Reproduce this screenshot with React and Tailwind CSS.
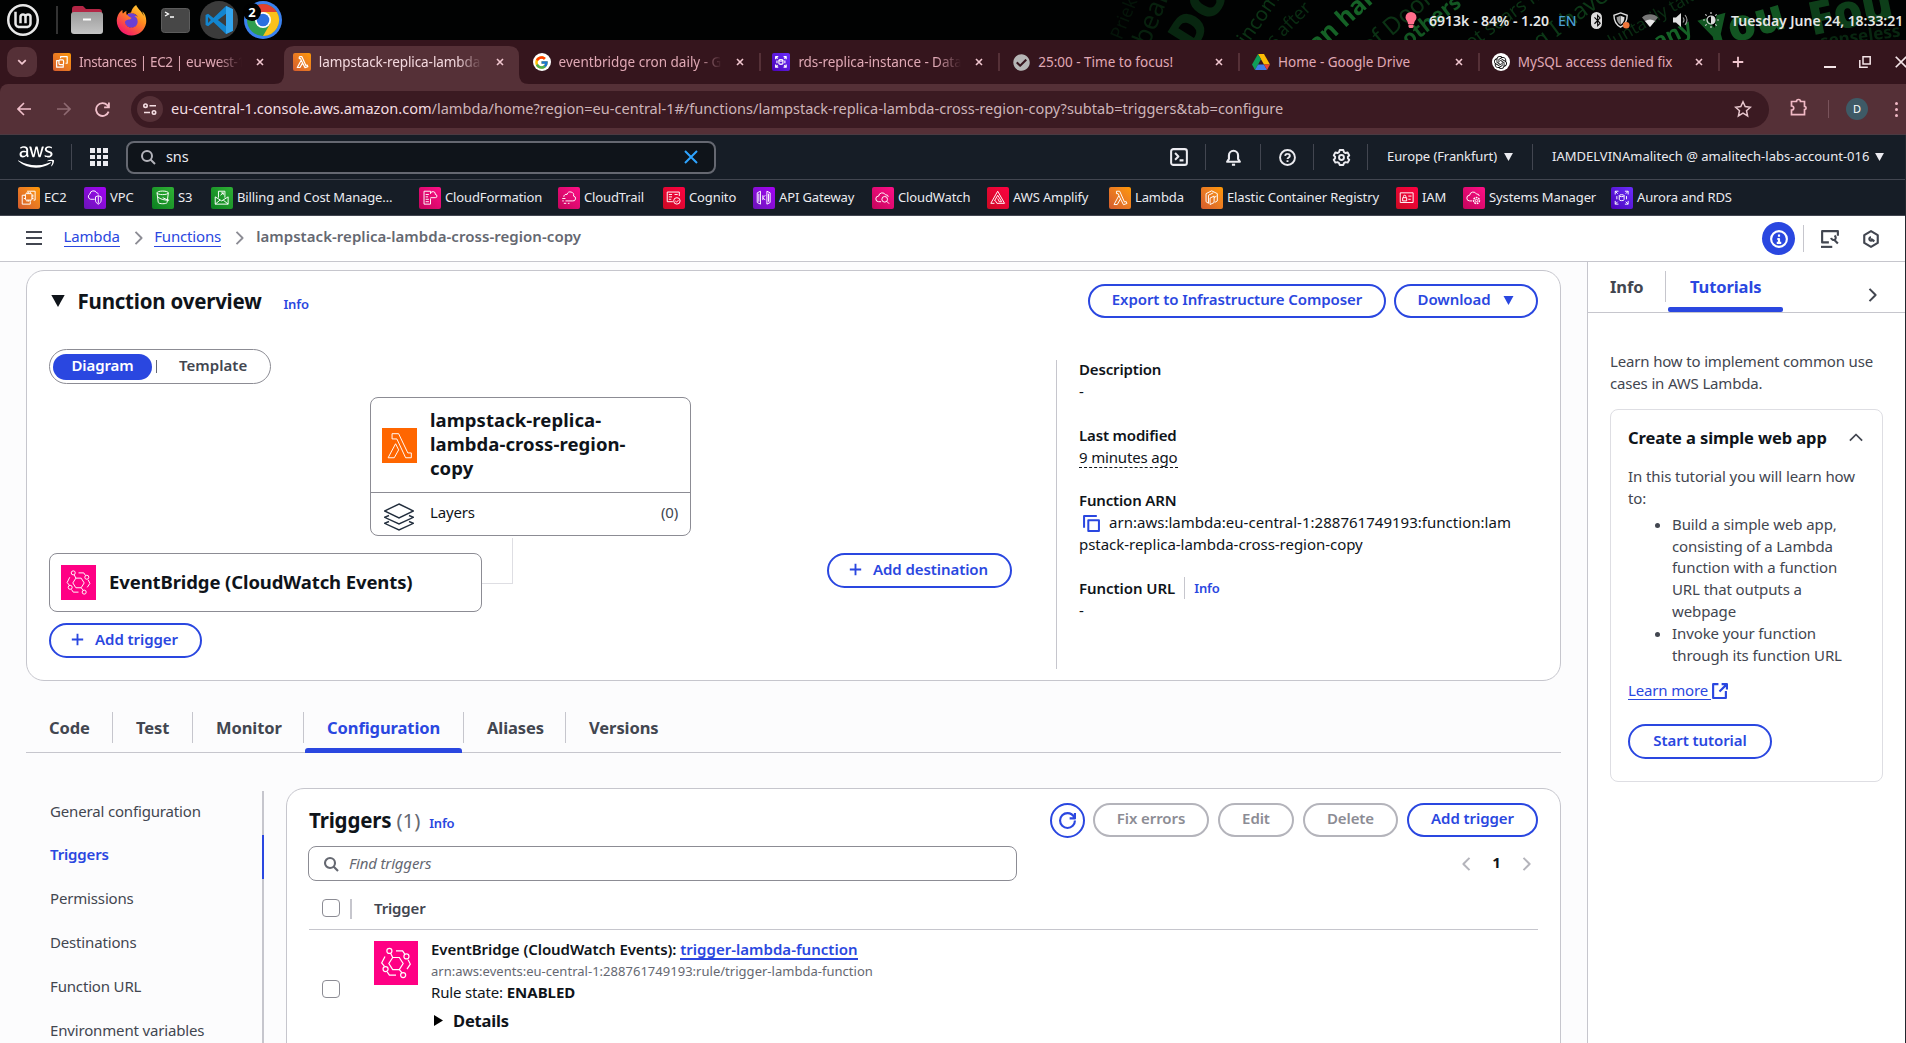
import React from 'react';
import { FcGoogle } from 'react-icons/fc';
import { FaAws, FaFirefoxBrowser, FaCheckCircle, FaBluetoothB } from 'react-icons/fa';
import { SiLinuxmint, SiOpenai } from 'react-icons/si';

/* ---------- generic glyphs (16px grid, 2px strokes) ---------- */
const paths = {
  search: <><circle cx="7" cy="7" r="5" /><path d="m15 15-4.5-4.5" /></>,
  close: <path d="m2 2 12 12M14 2 2 14" />,
  refresh: <path d="M15 8c0 3.87-3.13 7-7 7s-7-3.13-7-7 3.13-7 7-7c2.79 0 5.2 1.63 6.33 4M15 1v5h-5" />,
  plus: <path d="M8 1v14M1 8h14" />,
  right: <path d="m4 1 7 7-7 7" />,
  left: <path d="m12 1-7 7 7 7" />,
  up: <path d="m1 11 7-7 7 7" />,
  down: <path d="m2 5 6 6 6-6" />,
  copy: <><path d="M5 5h10v10H5z" /><path d="M13 1H1v11" /></>,
  external: <><path d="M14 8.5V15H2V2h5" /><path d="M10 2h5v5M15 2 8 9" /></>,
  menu: <path d="M0 2h16M0 8h16M0 14h16" />,
  info: <><circle cx="8" cy="8" r="7" /><path d="M8 11V8H6.5M8 4v2M6 11.4h4" /></>,
  help: <><circle cx="8" cy="8" r="7" /><path d="M5.8 6.5A2.1 2.1 0 0 1 8 4.6c1.3 0 2.2.8 2.2 1.9C10.200 8 8 8 8 9.500M8 10.700v1.500" /></>,
  shell: <><rect x="1" y="1" width="14" height="14" rx="2" /><path d="m4.500 4.500 3 3-3 3M8.500 11h3.500" /></>,
  bell: <><path d="M2 12h12l-1.700-2.700V6A4.300 4.300 0 0 0 3.700 6v3.300z" /><path d="M6.500 14.800h3" /></>,
  gear: <><circle cx="8" cy="8" r="2.300" /><path d="M6.300 1h3.400l.6 2 1.500.8 2-.5 1.500 2.800L14 7.300v1.500l1.300 1.300-1.500 2.700-2-.4-1.500.9-.6 1.800H6.300l-.6-1.800-1.500-.9-2 .4-1.500-2.700L2 8.800V7.300L.7 6l1.500-2.700 2 .5L5.700 3z" /></>,
  console: <><path d="M7 11H1V1h14v4" /><path d="M0 15h10" /><path d="m15 12-3.500-3.500M9 7a2.300 2.300 0 0 0 3.500 1.500A2.300 2.300 0 0 0 12 5" /></>,
  hexagon: <><path d="M8 1 14 4.500v7L8 15l-6-3.500v-7z" /><path d="M11 10 8 8M8 6.500a1.500 1.500 0 1 0 1.200 2.400" /></>,
};
const Glyph = ({ name, size = 16, w = 2, className = '' }) => (
  <svg viewBox="0 0 16 16" width={size} height={size} fill="none" stroke="currentColor" strokeWidth={w} strokeLinejoin="round" className={'block shrink-0 overflow-visible ' + className}>
    {paths[name]}
  </svg>
);
const Caret = ({ w = 10, h = 9, className = '' }) => (
  <svg viewBox="0 0 10 9" width={w} height={h} className={'block shrink-0 ' + className}><path d="M0 0h10L5 9z" fill="currentColor" /></svg>
);

/* ---------- service artwork (24px grid) ---------- */
const art = {
  ec2: <><rect x="8" y="7" width="8" height="8" rx="1" /><path d="M10 7V5M12 7V5M14 7V5M16 9h2M16 11h2M16 13h2M14 15v2M12 15v2M10 15v2M8 9H6M8 13H6" /><path d="M10 4h10v11h-2M7 9H4v11h10v-3" /></>,
  ec2Mark: <><rect x="7.500" y="9" width="7" height="7" rx="1.500" /><path d="M10 6.500V4h10v10h-2.500M7.500 10H4v10h10v-4" /></>,
  vpc: <><path d="M12 14H7a3.500 3.500 0 0 1-1-6.500A4.500 4.500 0 0 1 14.500 6c1 0 2 .8 2 2" /><path d="M16.500 9.500 20 11v4c0 2.500-1.500 4-3.500 5-2-1-3.500-2.500-3.500-5v-4zM16.500 10v9" /></>,
  s3: <><ellipse cx="12" cy="6" rx="7" ry="2.200" /><path d="M5 6l1.500 12c1 2 10 2 11 0L19 6M12 12l7 3.200M6 11c3 3 9 4.500 14 4" /></>,
  billing: <><path d="M8 12V4h8v8M4 11l8 5 8-5v9H4zM4 20l6-5M20 20l-6-5M10.500 9 14 6M11.500 6H14v2.500" /></>,
  cfn: <><path d="M5 4h8v3M5 4v16h8v-7M7 8h4M7 11h3M7 14h4M7 17h4" /><path d="M13 12h6a2 2 0 0 0 0-4 3 3 0 0 0-6-1" /></>,
  trail: <><path d="M8 16h9a3 3 0 0 0 1-6 4 4 0 0 0-8-2 3 3 0 0 0-4 3M4 16h2M4 13h4M6 19h3M11 19h2" /></>,
  cognito: <><path d="M19 10V5H4v12h7M6 8h4M6 11h4M6 14h3M13 8h4" /><circle cx="16" cy="16" r="4" /><path d="m14 16 1.500 1.500L18 15" /></>,
  api: <><path d="M8 4 4 6v12l4 2zM16 4l4 2v12l-4 2zM14 9l-3 3 3 3M11 9v6M6 7v10M18 7v10" /></>,
  watch: <><path d="M10 17H7a3.500 3.500 0 0 1 0-7 4.500 4.500 0 0 1 8.500-1.500A3 3 0 0 1 19 11" /><circle cx="14.500" cy="14" r="3.500" /><path d="m17 16.500 3 3" /></>,
  amplify: <><path d="M12 4 3.500 19H8M12 4l8.500 15H11l-2-3.500M12 9l-4 7M12 9l5 8h-3l-2-4" /></>,
  lambda: <path d="M8 4h4l6 13.500 2-.8 1 2.500-4.300 1.500L11 9.500M8 4v3h2l1 2.500L5 20.500h4l4-7" />,
  ecr: <><path d="M12 3.500 19 7v9l-3 1.800M12 3.500 5 7v10l3 2V9l6-3M10 20.500l5-2.500v-8l-5 2.500zM15 12l3-2" /></>,
  iam: <><path d="M4 6h16v12H4zM7 12h5v4H7zM8 12v-1.500a1.500 1.500 0 0 1 3 0V12M14 10h4M14 14h3" /></>,
  ssm: <><path d="M10 16H7a3.500 3.500 0 0 1 0-7 4.500 4.500 0 0 1 8.500-1.500A3 3 0 0 1 19 10" /><circle cx="15.500" cy="15.500" r="1.500" /><circle cx="15.500" cy="15.500" r="3.700" strokeDasharray="2.200 1" strokeWidth="1.800" /></>,
  rds: <><path d="M4 8V4h4M4 4l3 3M20 8V4h-4M20 4l-3 3M4 16v4h4M4 20l3-3M20 16v4h-4M20 20l-3-3" /><ellipse cx="12" cy="9.500" rx="3" ry="1.200" /><path d="M9 9.500v5c0 1.600 6 1.600 6 0v-5M6 10v4M18 10v4" /></>,
};
const tones = {
  orange: 'from-[#ff9900] to-[#d45b2c]',
  purple: 'from-[#a400f5] to-[#6b12b8]',
  green: 'from-[#2eb135] to-[#0a8020]',
  pink: 'from-[#ff0f87] to-[#c4055c]',
  red: 'from-[#ff0042] to-[#cc0a22]',
  indigo: 'from-[#6a2cff] to-[#4b00b8]',
};
const Service = ({ kind, tone, size = 'size-[22px]', w = 1.2 }) => (
  <span className={`grid shrink-0 place-items-center rounded-[2px] bg-gradient-to-bl ${tones[tone]} ${size}`}>
    <svg viewBox="0 0 24 24" className="size-[88%]" fill="none" stroke="#fff" strokeWidth={w} strokeLinejoin="round">{art[kind]}</svg>
  </span>
);
const EventBridgeArt = () => (
  <svg viewBox="0 0 40 40" className="size-full" fill="none" stroke="#fff" strokeWidth="1.100">
    <rect width="40" height="40" fill="#ff0084" stroke="none" />
    <path d="m17 15h6l3.500 5.500L23 26h-6l-3.500-5.500zM17 15l-2-4M23 26l2.500 3" />
    <circle cx="14" cy="9" r="2.300" /><circle cx="29.500" cy="14" r="2.300" /><circle cx="10.500" cy="25.500" r="2.300" /><circle cx="26.500" cy="31" r="2.300" />
    <path d="M20 9h6l2 3M31 17l2 4-3 4.500M10 14l-3 6 2.500 3M12 28l2 3h6" />
  </svg>
);
const LambdaArt = () => (
  <svg viewBox="0 0 40 40" className="size-full" fill="none" stroke="#fff" strokeWidth="1.100">
    <rect width="40" height="40" fill="#ff6600" stroke="none" />
    <path d="M11.500 6.500H19l10.500 22h4V34H27L17 12.500h-5.500zM15.500 18 7 34h7l5-9z" />
  </svg>
);

/* ---------- desktop bar ---------- */
const words = [
  ['left-[1043px] top-[9px] text-[18px] -rotate-[68deg] opacity-15', 'Priek'],
  ['left-[1070px] top-[4px] text-[26px] -rotate-[68deg] opacity-25', 'bear'],
  ['left-[1117px] -top-[10px] text-[46px] font-black -rotate-[58deg] opacity-30', 'DO'],
  ['left-[1178px] top-[8px] text-[20px] -rotate-[55deg] opacity-40', 'incom'],
  ['left-[1208px] top-[14px] text-[18px] -rotate-[45deg] opacity-35', 's after'],
  ['left-[1266px] top-[2px] text-[25px] font-bold -rotate-[42deg] opacity-80', 'an hard'],
  ['left-[1316px] top-[9px] text-[24px] -rotate-[40deg] opacity-40', 'of Door'],
  ['left-[1358px] top-[4px] text-[21px] font-bold -rotate-[38deg] opacity-70', 'others a'],
  ['left-[1420px] top-[11px] text-[19px] -rotate-[36deg] opacity-40', 'not sears m'],
  ['left-[1484px] top-[10px] text-[23px] -rotate-[36deg] opacity-45', 'ng I have'],
  ['left-[1566px] top-[12px] text-[17px] -rotate-[30deg] opacity-35', 'voluntarily take'],
  ['left-[1592px] top-[22px] text-[22px] font-bold -rotate-[26deg] opacity-80', 'any'],
  ['left-[1662px] top-[1px] text-[44px] font-black -rotate-[16deg] opacity-70', 'You'],
  ['left-[1770px] -top-[14px] text-[46px] font-black -rotate-[12deg] opacity-50', 'Fou'],
  ['left-[1780px] top-[27px] text-[17px] font-bold -rotate-[8deg] opacity-30', 'senseless'],
];
const DesktopBar = () => (
  <div className="relative flex h-10 shrink-0 items-center overflow-hidden bg-[#010202] tracking-normal text-[#e6e6e6]">
    <div className="pointer-events-none absolute inset-0 text-[#1a7a30]" aria-hidden="true">
      {words.map(([c, t]) => <span key={t} className={'absolute w-[160px] origin-center text-center leading-none whitespace-nowrap ' + c}>{t}</span>)}
    </div>
    <div className="relative flex items-center">
      <SiLinuxmint className="ml-[7px] size-8 text-[#e8e8e8]" />
      <span className="ml-[17px] h-7 w-[2px] bg-[#333]" />
      <svg className="ml-[13px] h-7 w-8" viewBox="0 0 32 28">
        <defs><linearGradient id="fold" x2="0" y2="1"><stop stopColor="#9b9b9b" /><stop offset="1" stopColor="#c4c4c4" /></linearGradient></defs>
        <path d="M1 3q0-3 3-3h8l3 3h13q3 0 3 3v6H1z" fill="#b32645" />
        <rect y="6" width="32" height="22" rx="3" fill="url(#fold)" /><path d="M12 13.500h8" stroke="#fff" strokeWidth="2" />
      </svg>
      <svg width="0" height="0" className="absolute"><defs><linearGradient id="fox" x1="1" y1="0" x2="0.3" y2="1"><stop stopColor="#ffe23a" /><stop offset=".45" stopColor="#ff8a1e" /><stop offset="1" stopColor="#f5156c" /></linearGradient></defs></svg>
      <span className="relative ml-[12px] grid size-8 place-items-center">
        <span className="absolute size-[15px] rounded-full bg-[#6b3fd4]" />
        <FaFirefoxBrowser className="relative size-[31px]" fill="url(#fox)" />
      </span>
      <svg className="ml-[14px] h-[25px] w-[29px]" viewBox="0 0 29 25">
        <rect x=".5" y=".5" width="28" height="24" rx="3" fill="#474747" stroke="#5c5c5c" /><path d="m4 4 3.500 2L4 8M9 9h4" fill="none" stroke="#fff" strokeWidth="1.300" />
      </svg>
      <span className="ml-[10px] grid size-[38px] place-items-center rounded-full bg-[#3b3b3b]">
        <svg viewBox="0 0 100 100" className="size-[28px]">
          <path d="M75 0 30 43 11 28 2 32v36l9 4 19-15 45 43 25-12V12zM75 28v44L46 50zM11 39l10 11-10 11z" fill="#1285cf" fillRule="evenodd" /><path d="M75 0v100l25-12V12z" fill="#33a5ee" />
        </svg>
      </span>
      <span className="relative ml-[6px] size-[38px]">
        <svg viewBox="0 0 38 38" className="size-[38px]">
          <circle cx="19" cy="19" r="19" fill="#3b82f0" /><circle cx="19" cy="19" r="16" fill="#2f9e4f" />
          <path d="M19 19 5.200 11A16 16 0 0 1 32.800 11z" fill="#e2402f" /><path d="M19 11h13.900A16 16 0 0 1 19 35l7-12z" fill="#fbc11b" />
          <circle cx="19" cy="19" r="8" fill="#fff" /><circle cx="19" cy="19" r="6.300" fill="#2b70e0" />
        </svg>
        <span className="absolute top-[2px] -left-px grid size-[18px] place-items-center rounded-full bg-black text-[13px] font-bold text-white">2</span>
      </span>
    </div>
    <div className="relative ml-auto flex items-center text-[14px] font-semibold whitespace-nowrap">
      <svg viewBox="0 0 12 16" className="mr-[9px] h-4 w-3"><path d="M6 0a5.500 5.500 0 0 1 5.500 5.500C11.500 8 9 9 9 12H3C3 9 .5 8 .5 5.500A5.500 5.500 0 0 1 6 0zM3.500 12.500h5V15l-1 1h-3l-1-1z" fill="#ff6f8b" /></svg>
      <span className="w-[131px] pl-[3px]">6913k - 84% - 1.20</span>
      <span className="w-[33px] pl-px font-medium text-[#4a9fd0]">EN</span>
      <span className="mr-[11px] ml-px grid h-[17px] w-[11px] place-items-center rounded-full bg-[#dcdcdc] text-black"><FaBluetoothB className="size-[13px]" /></span>
      <svg viewBox="0 0 18 18" className="mr-[12px] size-[17px]"><path d="M8 1 15 3.500c0 6-2 10-7 12.500C3 13.500 1 9.500 1 3.500z" fill="none" stroke="#ddd" strokeWidth="1.500" /><path d="M8 4v9.500c3-2 4-4.500 4.200-8z" fill="#ddd" /><path d="M8 4v9.500C5 11.500 4 9 3.800 5.500z" fill="#999" /><circle cx="14" cy="14" r="3.500" fill="#f0763a" /></svg>
      <svg viewBox="0 0 16 13" className="mr-[15px] h-[13px] w-4"><path d="M0 3.500C4-.8 12-.8 16 3.500L8 13z" fill="#777" /><path d="M3 7q5-3 10 0l-5 6z" fill="#e8e8e8" /></svg>
      <svg viewBox="0 0 15 14" className="mr-[15px] h-[14px] w-[15px]"><path d="M0 4.500h3L8 0v14l-5-4.500H0z" fill="#e0e0e0" /><path d="M10 4.500q2 2.500 0 5M12 2q4 5 0 10" fill="none" stroke="#999" strokeWidth="1.200" /></svg>
      <svg viewBox="0 0 16 16" className="mr-[12px] size-4"><circle cx="8" cy="8" r="4" fill="none" stroke="#ddd" strokeWidth="1.200" /><path d="M8 4a4 4 0 0 1 0 8z" fill="#ddd" /><path d="M8 0v2M8 14v2M0 8h2M14 8h2M2.300 2.300l1.400 1.400M12.300 12.300l1.400 1.400M2.300 13.700l1.400-1.400M12.300 3.700l1.400-1.400" stroke="#ccc" strokeWidth="1.200" /></svg>
      <span className="w-[175px] tracking-[-0.030px]">Tuesday June 24, 18:33:21</span>
    </div>
  </div>
);

/* ---------- browser chrome ---------- */
const tabs = [
  { icon: <Service kind="ec2Mark" tone="orange" size="size-[18px]" w={1.8} />, label: 'Instances | EC2 | eu-west-1', bar: false, fit: 'tracking-[-0.350px]' },
  { icon: <Service kind="lambda" tone="orange" size="size-[18px]" w={1.8} />, label: 'lampstack-replica-lambda-c', active: true, fit: 'tracking-[-0.080px]' },
  { icon: <span className="grid size-[18px] place-items-center rounded-full bg-white"><FcGoogle className="size-[15px]" /></span>, label: 'eventbridge cron daily - Go', bar: true },
  { icon: <Service kind="rds" tone="indigo" size="size-[18px]" w={1.8} />, label: 'rds-replica-instance - Data', bar: true, fit: 'tracking-[-0.080px]' },
  { icon: <FaCheckCircle className="size-[17px] text-[#b5b5b5]" />, label: '25:00 - Time to focus!', bar: true, short: true },
  { icon: <svg viewBox="0 0 18 16" className="h-4 w-[18px]"><path d="M6 0h6l6 10.500h-6z" fill="#fbbc04" /><path d="M6 0l3 5.200L3 16 0 10.500z" fill="#0f9d58" /><path d="M6 10.500h6L15 16H3z" fill="#3f7ee8" /><path d="M12 10.500h6L15 16z" fill="#ea4335" /></svg>, label: 'Home - Google Drive', bar: true, short: true },
  { icon: <span className="grid size-[18px] place-items-center rounded-full bg-white text-black"><SiOpenai className="size-[13px]" /></span>, label: 'MySQL access denied fix', bar: true, short: true },
];
const Tab = ({ icon, label, active, bar, short, fit = '' }) => (
  <div className={`relative flex h-[38px] w-[239.8px] shrink-0 items-center pb-[6px] ${active ? 'text-[#f4d9df]' : 'text-[#e0a9b5]'}`}>
    {active && (
      <svg viewBox="0 0 255 38" className="absolute top-0 -left-[10px] h-[38px] w-[255px]"><path d="M0 38q10 0 10-10V10Q10 0 20 0h215q10 0 10 10v18q0 10 10 10z" fill="#553037" /></svg>
    )}
    <span className="relative ml-[9px] grid w-[18px] shrink-0 place-items-center">{icon}</span>
    <span className={`relative ml-[8px] w-[164px] shrink-0 overflow-hidden text-[13.5px] whitespace-nowrap ${fit} ${short ? '' : '[mask-image:linear-gradient(90deg,#000_138px,transparent_163px)]'}`}>{label}</span>
    <Glyph name="close" size={8} w={3.2} className="relative ml-[13px] text-[#f1c6cf]" />
    {bar && <span className="ml-[15px] h-[18px] w-[2px] bg-[#553037]" />}
  </div>
);
const Browser = () => (
  <div className="shrink-0 bg-[#35151d] tracking-normal">
    <div className="flex h-11 items-end overflow-hidden">
      <div className="mb-[7px] ml-[7px] grid size-[30px] shrink-0 place-items-center rounded-[10px] bg-[#553037] text-[#f1c6cf]"><Glyph name="down" size={10} w={2.800} /></div>
      <div className="ml-[7px] flex shrink-0">{tabs.map((t) => <Tab key={t.label} {...t} />)}</div>
      <div className="flex h-[38px] shrink-0 items-center pb-[6px] text-[#f1c6cf]">
        <Glyph name="plus" size={12} w={2.400} className="ml-[9px]" />
        <span className="mt-[10px] ml-[80px] h-[2px] w-3 shrink-0 bg-[#f4e4e7]" />
        <svg viewBox="0 0 12 12" className="ml-[23px] size-3 shrink-0 text-[#f4e4e7]" fill="none" stroke="currentColor" strokeWidth="1.500"><path d="M4 .8h7.200V8H4zM.8 4v7.200h8" /></svg>
        <Glyph name="close" size={14} w={2} className="ml-[23px] text-[#f4e4e7]" />
      </div>
    </div>
    <div className="flex h-[50px] items-center rounded-tl-[8px] bg-[#553037]">
      <svg viewBox="0 0 14 14" className="ml-[17px] size-[14px] shrink-0" fill="none" stroke="#f1c0cb" strokeWidth="1.600"><path d="M14 7H1.500M7 1 1 7l6 6" /></svg>
      <svg viewBox="0 0 14 14" className="ml-[26px] size-[14px] shrink-0" fill="none" stroke="#8f6a72" strokeWidth="1.600"><path d="M0 7h12.500M7 1l6 6-6 6" /></svg>
      <svg viewBox="0 0 14 14" className="ml-[24px] size-[15px] shrink-0" fill="none" stroke="#f1c0cb" strokeWidth="1.700"><path d="M12.700 9A6 6 0 1 1 11.500 3L13 4.500M13 .500v4.500H8.500" /></svg>
      <div className="ml-[21px] flex h-[37px] w-[1638px] shrink-0 items-center rounded-full bg-[#3b1a22]">
        <span className="ml-[6px] grid size-[26px] place-items-center rounded-full bg-[#553037]">
          <svg viewBox="0 0 14 12" className="h-3 w-[14px]" fill="none" stroke="#f5dfe3" strokeWidth="1.600"><circle cx="2.500" cy="2.700" r="1.700" /><path d="M6.500 2.700H13M1 9.500h6" /><circle cx="11" cy="9.500" r="1.700" /></svg>
        </span>
        <span className="ml-[8px] text-[14.55px] whitespace-nowrap text-[#cdb4b9]"><span className="text-[#f3dde1]">eu-central-1.console.aws.amazon.com</span>/lambda/home?region=eu-central-1#/functions/lampstack-replica-lambda-cross-region-copy?subtab=triggers&amp;tab=configure</span>
        <svg viewBox="0 0 18 18" className="mr-[17px] ml-auto size-[18px]" fill="none" stroke="#e7c6cd" strokeWidth="1.500"><path d="m9 1.800 2.200 4.800 5.200.6-3.900 3.500 1.100 5.200L9 13.200l-4.600 2.700 1.100-5.200L1.600 7.200l5.200-.6z" /></svg>
      </div>
      <svg viewBox="0 0 18 18" className="-mt-1 ml-[21px] size-[18px] shrink-0" fill="none" stroke="#f1b9c5" strokeWidth="1.700"><path d="M1.500 3.500h5a2 2 0 0 1 4 0h4v5a1.600 1.600 0 0 1 0 3.200v5h-13v-4.500c3 0 3-4.200 0-4.200z" /></svg>
      <span className="ml-[20px] h-[18px] w-px bg-[#79535b]" />
      <span className="ml-[17px] grid size-[22px] shrink-0 place-items-center rounded-full bg-[#3e5a66] text-[11px] text-white">D</span>
      <span className="ml-[27px] flex flex-col gap-[3px]"><i className="size-[3px] rounded-full bg-[#f1b9c5]" /><i className="size-[3px] rounded-full bg-[#f1b9c5]" /><i className="size-[3px] rounded-full bg-[#f1b9c5]" /></span>
    </div>
    <div className="h-px bg-[#4b3a42]" />
  </div>
);

/* ---------- console header ---------- */
const favourites = [
  ['ec2', 'orange', 'EC2', 'w-[66px]'], ['vpc', 'purple', 'VPC', 'w-[68px]'], ['s3', 'green', 'S3', 'w-[59px]'],
  ['billing', 'green', 'Billing and Cost Manage…', 'w-[208px]'], ['cfn', 'pink', 'CloudFormation', 'w-[139px]'],
  ['trail', 'pink', 'CloudTrail', 'w-[105px]'], ['cognito', 'red', 'Cognito', 'w-[90px]'], ['api', 'purple', 'API Gateway', 'w-[119px]'],
  ['watch', 'pink', 'CloudWatch', 'w-[115px]'], ['amplify', 'red', 'AWS Amplify', 'w-[122px]'], ['lambda', 'orange', 'Lambda', 'w-[92px]'],
  ['ecr', 'orange', 'Elastic Container Registry', 'w-[195px]'], ['iam', 'red', 'IAM', 'w-[67px]'],
  ['ssm', 'pink', 'Systems Manager', 'w-[148px]'], ['rds', 'indigo', 'Aurora and RDS', 'w-[130px]'],
];
const Bar = () => <span className="block h-[26px] w-px shrink-0 bg-[#424650]" />;
const ConsoleHeader = () => (
  <header className="shrink-0 bg-[#161d26] text-[#ebebf0]">
    <div className="flex h-11 items-center">
      <FaAws className="mr-[17px] ml-[18px] size-[36px] text-white" />
      <Bar />
      <span className="ml-[18px] grid shrink-0 grid-cols-3 gap-[2px]">{[0, 1, 2, 3, 4, 5, 6, 7, 8].map((i) => <i key={i} className="size-[4.700px] bg-[#ebebf0]" />)}</span>
      <div className="ml-[18px] flex h-[33px] w-[590px] shrink-0 items-center rounded-[8px] border-2 border-[#656871] bg-[#0f141a] pr-[15px] pl-[12px]">
        <Glyph name="search" className="text-[#b4b4bb]" />
        <span className="ml-[10px] text-[14.5px]">sns</span>
        <Glyph name="close" size={16} className="ml-auto text-[#2ea4ff]" />
      </div>
      <div className="ml-auto flex h-full items-center">
        <Glyph name="shell" size={18} w={1.800} className="mr-[17px]" /><Bar />
        <Glyph name="bell" size={17} className="mx-[18.500px]" /><Bar />
        <Glyph name="help" size={17} w={1.800} className="mx-[17.500px]" /><Bar />
        <Glyph name="gear" size={17} w={1.800} className="mr-[17.500px] ml-[18.500px]" /><Bar />
        <span className="ml-[19px] w-[117px] text-[13px] tracking-[-0.080px] whitespace-nowrap">Europe (Frankfurt)</span><Caret w={9} h={8} className="mr-[19px]" /><Bar />
        <span className="ml-[19px] w-[323px] text-[13px] tracking-[0.010px] whitespace-nowrap">IAMDELVINAmalitech @ amalitech-labs-account-016</span><Caret w={9} h={8} className="mr-[21px]" />
      </div>
    </div>
    <div className="flex h-[36px] items-center border-t border-[#424650] pl-[18px]">
      {favourites.map(([k, t, l, w]) => (
        <span key={l} className={`flex shrink-0 items-center gap-[4px] text-[13px] tracking-[-0.120px] whitespace-nowrap ${w}`}><Service kind={k} tone={t} />{l}</span>
      ))}
    </div>
    <div className="h-px bg-[#424650]" />
  </header>
);
const Crumbs = () => (
  <div className="flex h-[46px] shrink-0 items-center border-b border-[#c6c6cd] bg-white text-[15px] tracking-[-0.160px]">
    <Glyph name="menu" size={16} w={1.900} className="-mt-[2px] ml-[26px] text-[#424650]" />
    <span className="-mt-[3px] ml-[21.500px] border-b border-[#2a47e0] leading-[19px] text-[#2a47e0]">Lambda</span>
    <Glyph name="right" size={14} w={2.100} className="-mt-[2px] ml-[12px] text-[#8c8c94]" />
    <span className="-mt-[3px] ml-[8.500px] border-b border-[#2a47e0] leading-[19px] text-[#2a47e0]">Functions</span>
    <Glyph name="right" size={14} w={2.100} className="-mt-[2px] ml-[12px] text-[#8c8c94]" />
    <span className="-mt-[4px] ml-[9px] font-semibold tracking-[0.050px] text-[#656871]">lampstack-replica-lambda-cross-region-copy</span>
    <span className="mr-[8px] ml-auto grid size-[33px] place-items-center rounded-full bg-[#2a47e0] text-white"><Glyph name="info" size={18} w={1.900} /></span>
    <span className="h-[27px] w-px bg-[#c6c6cd]" />
    <Glyph name="console" size={18} w={1.900} className="ml-[17px] text-[#424650]" />
    <Glyph name="hexagon" size={18} w={1.900} className="mr-[25px] ml-[23px] text-[#424650]" />
  </div>
);

/* ---------- page pieces ---------- */
const Button = ({ children, className = '', off }) => (
  <button className={`flex shrink-0 items-center justify-center rounded-[22px] border-2 bg-white text-[15px] font-semibold tracking-[-0.080px] whitespace-nowrap ${off ? 'border-[#b4b4bb] text-[#8c8c94]' : 'border-[#2a47e0] text-[#2a47e0]'} ${className}`}>{children}</button>
);
const Field = ({ label, children, className = '' }) => (
  <div className={`leading-[22px] ${className}`}>
    <div className="font-semibold text-[#0f141a]">{label}</div>
    <div>{children}</div>
  </div>
);
const Overview = () => (
  <section className="ml-[26px] flex h-[411px] w-[1535px] shrink-0 flex-col rounded-[18px] border border-[#c6c6cd] bg-white">
    <div className="flex h-[62px] shrink-0 items-center pr-[22px] pb-[2px] pl-[24px]">
      <Caret w={14} h={12} className="text-[#0f141a]" />
      <h2 className="ml-[12.500px] text-[20.500px] font-bold tracking-[-0.220px]">Function overview</h2>
      <a className="mt-[8px] ml-[22px] text-[13px] font-semibold text-[#2a47e0]">Info</a>
      <Button className="ml-auto h-[34px] w-[298px] pb-[3px]">Export to Infrastructure Composer</Button>
      <Button className="ml-[8px] h-[34px] w-[144px] pb-[3px]">Download<Caret w={11} h={9} className="mt-[2px] ml-[13px]" /></Button>
    </div>
    <div className="flex flex-1">
      <div className="relative w-[1029px] shrink-0 pt-[16px] pl-[22px]">
        <div className="flex h-[35px] w-[222px] items-center rounded-full border border-[#8c8c94] pl-[3px] text-[15px] font-semibold tracking-[-0.080px]">
          <span className="grid h-[26px] w-[99px] place-items-center rounded-full bg-[#2a47e0] pb-[2px] text-white">Diagram</span>
          <span className="ml-[4px] h-[13px] w-px bg-[#656871]" />
          <span className="ml-[22px] pb-[2px] tracking-[0.050px] text-[#424650]">Template</span>
        </div>
        <div className="mt-[13px] ml-[321px] w-[321px] rounded-[8px] border border-[#8c8c94]">
          <div className="flex h-[95px] items-center border-b border-[#8c8c94] pl-[11px]">
            <span className="size-[35px]"><LambdaArt /></span>
            <div className="-mt-[2px] ml-[13px] w-[220px] text-[18.500px] leading-[24px] font-bold tracking-[0.070px]">lampstack-replica-<br />lambda-cross-region-<br />copy</div>
          </div>
          <div className="flex h-[42px] items-center pr-[12px] pl-[13px]">
            <svg viewBox="0 0 30 28" className="mt-[5px] h-[28px] w-[30px]" fill="none" stroke="#232f3e" strokeWidth="1.400"><path d="M15 1 29.500 8 15 15 .5 8zM5 12.500.5 14.300 15 21l14.500-6.700L25 12.500M5 18.500.5 20.300 15 27l14.500-6.700L25 18.500" /></svg>
            <span className="mb-[4px] ml-[16px] flex-1">Layers</span><span className="mb-[4px] text-[#424650]">(0)</span>
          </div>
        </div>
        <div className="flex">
          <div className="mt-[17px] flex h-[59px] w-[433px] items-center rounded-[8px] border border-[#8c8c94] pl-[11px]">
            <span className="size-[35px]"><EventBridgeArt /></span>
            <span className="ml-[13px] pb-[2px] text-[18.500px] font-bold tracking-[-0.110px] whitespace-nowrap">EventBridge (CloudWatch Events)</span>
          </div>
          <span className="mt-[2px] h-[46px] w-[31px] border-r border-b border-[#dedee3]" />
          <Button className="mt-[17px] ml-[314px] h-[35px] w-[185px] pr-[2px] pb-[2px]"><Glyph name="plus" size={13} w={2.300} className="mr-[11px]" />Add destination</Button>
        </div>
        <Button className="mt-[11px] h-[35px] w-[153px] pr-[2px] pb-[2px]"><Glyph name="plus" size={13} w={2.300} className="mr-[11px]" />Add trigger</Button>
      </div>
      <div className="mt-[27px] mb-[11px] border-l border-[#c6c6cd] pl-[22px]">
        <Field label="Description" className="-mt-[2px] mb-[22px]">-</Field>
        <Field label="Last modified" className="mb-[21px]"><span className="inline-block border-b border-dashed border-[#0f141a] leading-[19px]">9 minutes ago</span></Field>
        <Field label="Function ARN" className="mb-[22px]">
          <div className="flex items-center tracking-[0.020px]"><Glyph name="copy" size={17} w={1.900} className="mt-[3px] mr-[9px] ml-[4px] text-[#2a47e0]" />arn:aws:lambda:eu-central-1:288761749193:function:lam</div>
          <span className="tracking-[-0.030px]">pstack-replica-lambda-cross-region-copy</span>
        </Field>
        <Field label={<span className="flex items-center tracking-[-0.060px]">Function URL<span className="ml-[9px] h-[22px] w-px bg-[#c6c6cd]" /><a className="ml-[9px] text-[13px] text-[#2a47e0]">Info</a></span>}>-</Field>
      </div>
    </div>
  </section>
);
const pageTabs = [['Code', 'w-[87px] pl-[23px]'], ['Test', 'w-[80px] pl-[23px]'], ['Monitor', 'w-[111px] pl-[23px]'], ['Configuration', 'w-[160px] pl-[23px]'], ['Aliases', 'w-[102px] pl-[23px]'], ['Versions', 'w-[110px] pl-[23px]']];
const PageTabs = () => (
  <div className="mt-[31px] ml-[26px] flex h-[41px] w-[1535px] shrink-0 border-b border-[#c6c6cd] text-[16.500px] font-bold tracking-[-0.080px] text-[#424650]">
    {pageTabs.map(([t, w], i) => (
      <div key={t} className={`relative ${w}`}>
        <span className={`block leading-[32px] ${i === 3 ? 'text-[#2a47e0]' : ''}`}>{t}</span>
        {i === 3 && <span className="absolute right-[2px] -bottom-px left-px h-[5px] rounded-t-[3px] bg-[#2a47e0]" />}
        {i < 5 && <span className="absolute top-0 right-0 h-[31px] w-px bg-[#c6c6cd]" />}
      </div>
    ))}
  </div>
);
const side = ['General configuration', 'Triggers', 'Permissions', 'Destinations', 'Function URL', 'Environment variables'];
const Triggers = () => (
  <section className="ml-[22px] flex h-[300px] w-[1275px] shrink-0 flex-col rounded-[18px] border border-[#c6c6cd] bg-white px-[22px] pt-[14px]">
    <div className="flex h-[34px] items-center">
      <h2 className="text-[20.500px] font-bold tracking-[-0.160px]">Triggers <span className="font-normal text-[#656871]">(1)</span></h2>
      <a className="mt-[7px] ml-[9px] text-[13px] font-semibold text-[#2a47e0]">Info</a>
      <Button className="ml-auto size-[35px]"><Glyph name="refresh" size={17} w={2} /></Button>
      <Button off className="ml-[8px] h-[34px] w-[116px] pb-[3px]">Fix errors</Button>
      <Button off className="ml-[9px] h-[34px] w-[76px] pb-[3px]">Edit</Button>
      <Button off className="ml-[9px] h-[34px] w-[95px] pb-[3px]">Delete</Button>
      <Button className="ml-[9px] h-[34px] w-[131px] pb-[3px]">Add trigger</Button>
    </div>
    <div className="mt-[9px] -ml-px flex items-center">
      <div className="flex h-[35px] w-[709px] items-center rounded-[8px] border border-[#8c8c94] pl-[14px] text-[#656871]"><Glyph name="search" size={16} w={2.100} /><span className="ml-[10px] italic">Find triggers</span></div>
      <Glyph name="left" size={14} w={2.300} className="ml-auto text-[#b4b4bb]" />
      <span className="w-[47px] pb-[2px] text-center font-bold">1</span>
      <Glyph name="right" size={14} w={2.300} className="mr-[4px] text-[#b4b4bb]" />
    </div>
    <div className="flex h-[49px] shrink-0 items-center border-b border-[#c6c6cd] pt-[7px]">
      <span className="-mt-px ml-[13px] h-[18px] w-[18px] rounded-[4px] border border-[#8c8c94]" />
      <span className="ml-[10px] h-[20px] w-[2px] bg-[#c6c6cd]" />
      <span className="-mt-px ml-[22px] text-[15px] font-semibold text-[#424650]">Trigger</span>
    </div>
    <div className="flex">
      <span className="mt-[50px] ml-[13px] h-[18px] w-[18px] shrink-0 rounded-[4px] border border-[#8c8c94]" />
      <span className="mt-[11px] ml-[34px] size-[44px] shrink-0"><EventBridgeArt /></span>
      <div className="mt-[9px] ml-[13px] leading-[21.600px] whitespace-nowrap">
        <div className="font-semibold tracking-[-0.060px]">EventBridge (CloudWatch Events): <a className="inline-block border-b-2 border-[#2a47e0] leading-[18px] tracking-[0.020px] text-[#2a47e0]">trigger-lambda-function</a></div>
        <div className="text-[13px] tracking-[0.020px] text-[#656871]">arn:aws:events:eu-central-1:288761749193:rule/trigger-lambda-function</div>
        <div>Rule state: <b className="font-bold tracking-[-0.020px]">ENABLED</b></div>
        <div className="mt-[6px] ml-[3px] flex items-center text-[16.500px] font-bold"><svg viewBox="0 0 9 11" className="mr-[10px] h-[11px] w-[9px]"><path d="M0 0l9 5.500L0 11z" /></svg>Details</div>
      </div>
    </div>
  </section>
);
const HelpPanel = () => (
  <aside className="flex w-[318px] shrink-0 flex-col border-l border-[#c6c6cd] bg-white text-[#424650]">
    <div className="flex h-[51px] shrink-0 border-b border-[#c6c6cd] text-[16.500px] font-bold tracking-[-0.100px]">
      <span className="mt-[9px] ml-[22px] h-[31px] w-[56px] border-r border-[#c6c6cd] leading-[32px]">Info</span>
      <span className="mt-[9px] ml-px flex w-[116px] flex-col pl-px leading-[32px] text-[#2a47e0]"><span className="pl-[22px]">Tutorials</span><span className="mt-[4px] h-[5px] rounded-[2px] bg-[#2a47e0]" /></span>
      <Glyph name="right" size={14} w={2.300} className="mt-[26px] mr-[25px] ml-auto" />
    </div>
    <p className="mt-[38px] ml-[22px] text-[15px] leading-[21.800px] whitespace-nowrap">Learn how to implement common use<br />cases in AWS Lambda.</p>
    <div className="mt-[14px] ml-[22px] flex h-[373px] w-[273px] shrink-0 flex-col items-start rounded-[8px] border border-[#dedee3] pr-[19px] pl-[17px]">
      <div className="mt-[16px] flex w-full items-center text-[16.500px] leading-[24px] font-bold tracking-[-0.100px] whitespace-nowrap text-[#0f141a]">Create a simple web app<Glyph name="up" size={14} w={2} className="ml-auto text-[#424650]" /></div>
      <p className="mt-[15px] leading-[22px] tracking-[-0.100px] whitespace-nowrap">In this tutorial you will learn how<br />to:</p>
      <ul className="mt-[5px] list-disc pl-[44px] leading-[21.900px] tracking-[-0.100px] whitespace-nowrap">
        <li>Build a simple web app,<br />consisting of a Lambda<br />function with a function<br />URL that outputs a<br />webpage</li>
        <li>Invoke your function<br />through its function URL</li>
      </ul>
      <a className="mt-[14px] flex items-center text-[#2a47e0]"><span className="border-b border-[#2a47e0] pr-[3px] leading-[18px]">Learn more</span><Glyph name="external" size={17} w={2} className="mt-px" /></a>
      <Button className="mt-[24px] h-[35px] w-[144px] pb-[3px]">Start tutorial</Button>
    </div>
  </aside>
);

export default function App() {
  return (
    <div className="flex h-screen w-[1906px] flex-col overflow-hidden bg-white font-['Noto_Sans',sans-serif] text-[15px] tracking-[-0.160px] text-[#0f141a]">
      <DesktopBar />
      <Browser />
      <div className="flex min-h-0 flex-1 border-r border-[#23272e]">
        <div className="flex min-w-0 flex-1 flex-col">
          <ConsoleHeader />
          <Crumbs />
          <div className="flex min-h-0 flex-1">
            <main className="flex min-w-0 flex-1 flex-col overflow-hidden bg-[#fcfcfd] pt-[8px]">
              <Overview />
              <PageTabs />
              <div className="mt-[35px] flex shrink-0">
                <nav className="mt-[3px] ml-[26px] h-[260px] w-[238px] border-r-2 border-[#c6c6cd] text-[#424650]">
                  {side.map((s, i) => (
                    <div key={s} className={`-mr-[2px] flex h-[43.800px] items-center pb-[4px] pl-[24px] ${i === 1 ? 'border-r-2 border-[#2a47e0] font-semibold text-[#2a47e0]' : ''}`}>{s}</div>
                  ))}
                </nav>
                <Triggers />
              </div>
            </main>
            <HelpPanel />
          </div>
        </div>
      </div>
    </div>
  );
}
